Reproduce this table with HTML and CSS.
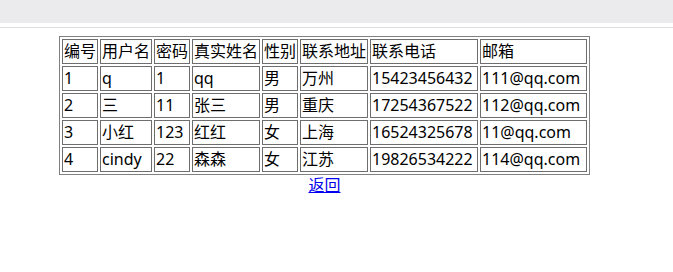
FILE: index.html
```html
<!DOCTYPE html>
<html lang="zh">
<head>
<meta charset="utf-8">
<title>用户列表</title>
<link rel="stylesheet" href="styles.css">
</head>
<body>
<div class="topbar"></div>
<div class="rule"></div>
<div class="content">
  <div class="wrap">
    <table class="users">
      <colgroup>
        <col class="c1"><col class="c2"><col class="c3"><col class="c4"><col class="c5"><col class="c6"><col class="c7"><col class="c8">
      </colgroup>
      <tr><td>编号</td><td>用户名</td><td>密码</td><td>真实姓名</td><td>性别</td><td>联系地址</td><td>联系电话</td><td>邮箱</td></tr>
      <tr><td>1</td><td>q</td><td>1</td><td>qq</td><td>男</td><td>万州</td><td>15423456432</td><td>111@qq.com</td></tr>
      <tr><td>2</td><td>三</td><td>11</td><td>张三</td><td>男</td><td>重庆</td><td>17254367522</td><td>112@qq.com</td></tr>
      <tr><td>3</td><td>小红</td><td>123</td><td>红红</td><td>女</td><td>上海</td><td>16524325678</td><td>11@qq.com</td></tr>
      <tr><td>4</td><td>cindy</td><td>22</td><td>森森</td><td>女</td><td>江苏</td><td>19826534222</td><td>114@qq.com</td></tr>
    </table>
    <a class="back" href="#">返回</a>
  </div>
</div>
</body>
</html>
```
FILE: styles.css
```css
html, body {
  margin: 0;
  padding: 0;
  background: #ffffff;
}
body {
  font-family: "Noto Sans", "Noto Sans CJK SC", sans-serif;
  font-size: 16px;
  color: #000000;
}
.topbar {
  height: 23px;
  background: #ebebed;
}
.rule {
  margin-top: 4px;
  height: 1px;
  background: #dedede;
}
.content {
  padding: 8px 0 0 59px;
}
.wrap {
  display: inline-flex;
  flex-direction: column;
  align-items: center;
}
.users {
  table-layout: fixed;
  width: 531px;
  border: 1px solid #808080;
  border-spacing: 2px;
  border-collapse: separate;
}
.users td {
  border: 1px solid #6e6e6e;
  padding: 1px 1px;
  height: 21px;
  line-height: 21px;
  white-space: nowrap;
  overflow: visible;
  text-align: left;
  vertical-align: middle;
}
.c1 { width: 36px; }
.c2 { width: 52px; }
.c3 { width: 36px; }
.c4 { width: 68px; }
.c5 { width: 36px; }
.c6 { width: 68px; }
.c7 { width: 108px; }
.c8 { width: 107px; }
.back {
  color: #0000ee;
  text-decoration: underline;
  line-height: 21px;
}
```
